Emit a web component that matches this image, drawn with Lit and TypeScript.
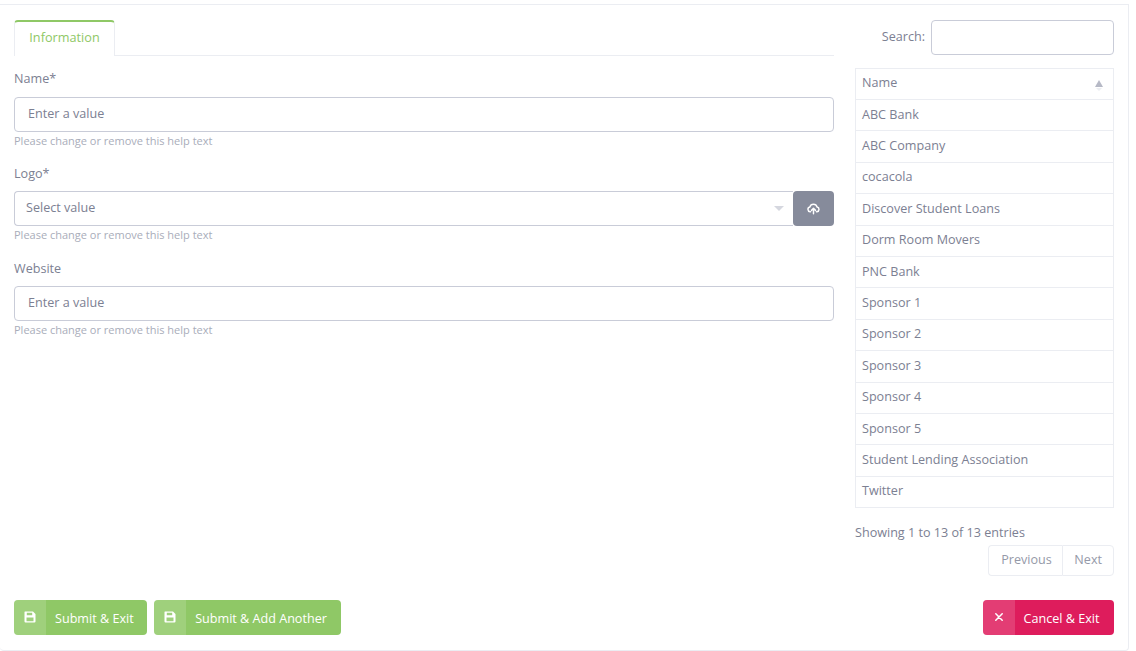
import { LitElement, html, css } from "lit";
import { customElement } from "lit/decorators.js";

const saveIcon = html`<svg class="ic" width="12" height="12" viewBox="0 0 12 12"><path fill="currentColor" fill-rule="evenodd" d="M1 0.500H9L11.500 3V10.500A1 1 0 0 1 10.500 11.500H1.500A1 1 0 0 1 .5 10.500V1A.5.500 0 0 1 1 .5ZM2.800 1.800V4.300H8.200V1.800ZM2.500 6.500V10.200H9.500V6.500Z"/></svg>`;

const rows = ["ABC Bank","ABC Company","cocacola","Discover Student Loans","Dorm Room Movers","PNC Bank","Sponsor 1","Sponsor 2","Sponsor 3","Sponsor 4","Sponsor 5","Student Lending Association","Twitter"];

@customElement("app-root")
export class AppRoot extends LitElement {
  static styles = css`
    :host { display: block; width: 1136px; height: 651px; background: #fff; overflow: hidden; font-family: "Open Sans", sans-serif; font-size: 12.600px; color: #7c8092; padding-top: 4px; box-sizing: border-box; }
    * { box-sizing: border-box; }
    .card { width: 1129px; height: 647px; border: 1px solid #ebedf2; border-left: 0; border-radius: 0 0 4px 4px; padding: 15px 14px 15px 14px; display: flex; flex-direction: column; }
    .main { display: flex; gap: 21px; flex: 1; min-height: 0; }
    .left { width: 820px; }
    .right { width: 259px; }
    .tabs { height: 36px; border-bottom: 1px solid #ebedf2; display: flex; margin-bottom: 13.450px; }
    .tab { width: 101px; height: 36px; border: 1px solid #ebedf2; border-top: 2px solid #8fc866; border-bottom: 0; border-radius: 4px 4px 0 0; background: #fff; color: #8fc866; text-align: center; line-height: 31px; font-size: 12.700px; }
    .group { margin-bottom: 15.350px; }
    label { display: block; line-height: 19px; height: 19px; margin-bottom: 8.250px; }
    .input { height: 35px; border: 1px solid #c9ccd8; border-radius: 4px; padding: 0 13px; line-height: 32px; color: #7c8092; }
    .help { font-size: 11px; color: #a9adba; line-height: 16px; margin-top: 1px; height: 16px; }
    .igroup { display: flex; }
    .select { flex: 1; height: 35px; border: 1px solid #c9ccd8; border-right: 0; border-radius: 4px 0 0 4px; padding: 0 11px 2px; color: #7c8092; display: flex; justify-content: space-between; align-items: center; }
    .caret { width: 0; height: 0; border-left: 5px solid transparent; border-right: 5px solid transparent; border-top: 5px solid #d5d7df; margin: 2px -2px 0 0; }
    .upload { width: 41px; height: 35px; background: #868b9b; border-radius: 4px; display: flex; align-items: center; justify-content: center; color: #fff; }
    .search { display: flex; justify-content: flex-end; align-items: center; gap: 6px; height: 35px; margin-bottom: 13px; }
    .search span { padding-bottom: 3px; }
    .search .box { width: 183px; height: 35px; border: 1px solid #c9ccd8; border-radius: 4px; }
    .table { border: 1px solid #ebedf2; border-bottom: 0; }
    .row { height: 31.400px; padding: 0 6px 2px; border-bottom: 1px solid #ebedf2; display: flex; justify-content: space-between; align-items: center; }
    .row.head { height: 31px; padding-bottom: 3px; }
    .sort { position: relative; width: 9px; height: 14px; margin-right: 3px; }
    .sort::before { content: ""; position: absolute; left: 0; top: 4px; border-left: 4px solid transparent; border-right: 4px solid transparent; border-bottom: 7px solid #b6b9c6; }
    .sort::after { content: ""; position: absolute; left: 1px; top: 12px; border-left: 3px solid transparent; border-right: 3px solid transparent; border-top: 3px solid #eceef2; }
    .info { margin-top: 15px; line-height: 19px; }
    .pager { display: flex; justify-content: flex-end; margin-top: 3px; }
    .pager div { height: 31px; line-height: 28px; padding: 0 11px; border: 1px solid #ebedf2; color: #9599a8; }
    .pager div:first-child { border-radius: 4px 0 0 4px; border-right: 0; padding: 0 10.500px 0 12px; }
    .pager div:last-child { border-radius: 0 4px 4px 0; }
    .actions { display: flex; gap: 7px; margin-top: auto; }
    .btn { height: 35px; border-radius: 4px; display: flex; align-items: stretch; color: #fff; background: #8fc866; white-space: nowrap; }
    .btn .i { width: 32px; display: flex; align-items: center; justify-content: center; background: rgba(255,255,255,.15); border-radius: 4px 0 0 4px; padding-bottom: 2px; }
    .btn .t { padding: 0 13.500px 0 9px; line-height: 37px; }
    .btn.wide .t, .btn.cancel .t { padding-right: 14.500px; }
    .cancel { margin-left: auto; background: #de1c5c; }
    .ic { display: block; }
  `;

  render() {
    return html`<div class="card">
      <div class="main">
        <div class="left">
          <div class="tabs"><div class="tab">Information</div></div>
          <div class="group"><label>Name*</label><div class="input">Enter a value</div><div class="help">Please change or remove this help text</div></div>
          <div class="group"><label>Logo*</label><div class="igroup"><div class="select">Select value<span class="caret"></span></div><div class="upload">
            <svg width="13" height="13" viewBox="0 0 16 16" fill="none"><path d="M4.300 12H3.800A3 3 0 0 1 3.500 6.100 4.600 4.600 0 0 1 12.400 6.100 3 3 0 0 1 12.200 12H11.700" stroke="#fff" stroke-width="1.800" stroke-linecap="round"/><path d="M8 14.500V8M5.500 10.300 8 7.800 10.500 10.300" stroke="#fff" stroke-width="1.800" stroke-linecap="round" stroke-linejoin="round"/></svg>
          </div></div><div class="help">Please change or remove this help text</div></div>
          <div class="group"><label>Website</label><div class="input">Enter a value</div><div class="help">Please change or remove this help text</div></div>
        </div>
        <div class="right">
          <div class="search"><span>Search:</span><div class="box"></div></div>
          <div class="table">
            <div class="row head"><span>Name</span><span class="sort"></span></div>
            ${rows.map((r) => html`<div class="row">${r}</div>`)}
          </div>
          <div class="info">Showing 1 to 13 of 13 entries</div>
          <div class="pager"><div>Previous</div><div>Next</div></div>
        </div>
      </div>
      <div class="actions">
        <div class="btn"><span class="i">${saveIcon}</span><span class="t">Submit &amp; Exit</span></div>
        <div class="btn wide"><span class="i">${saveIcon}</span><span class="t">Submit &amp; Add Another</span></div>
        <div class="btn cancel"><span class="i"><svg class="ic" width="8" height="8" viewBox="0 0 8 8"><path d="M.8.800 7.200 7.200M7.200.800.8 7.200" stroke="#fff" stroke-width="1.500" stroke-linecap="round"/></svg></span><span class="t">Cancel &amp; Exit</span></div>
      </div>
    </div>`;
  }
}
